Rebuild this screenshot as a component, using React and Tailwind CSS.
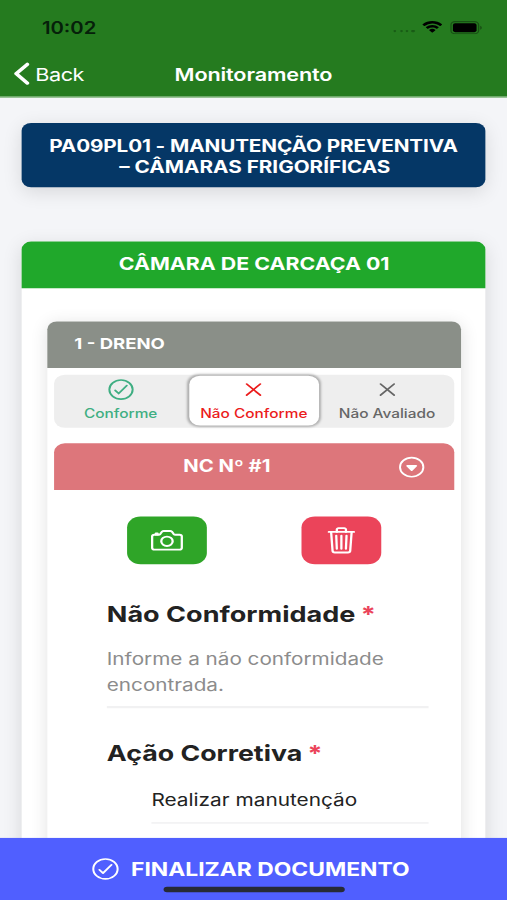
import {
  IoCameraOutline,
  IoCaretDownCircleOutline,
  IoCheckmarkCircleOutline,
  IoCloseOutline,
  IoTrashOutline,
} from 'react-icons/io5';

export default function App() {
  return (
    <div className="w-[507px] h-[900px] overflow-hidden bg-[#f4f5f8]">
      {/* 375x812 phone screen stretched to the window */}
      <div className="w-[375px] h-[812px] flex flex-col origin-top-left scale-x-[1.352] scale-y-[1.10837] bg-[#f4f5f8] font-['Inter','Liberation_Sans',sans-serif]">
        <Header />
        <main className="flex-1 min-h-0 overflow-hidden pl-4 pr-[16px] pt-[23.3px]">
          <div className="h-[58px] rounded-[7px] bg-[#053766] text-white text-center text-[15.3px] leading-[19.2px] font-bold pt-[10.5px] shadow-[0_4px_16px_rgba(0,0,0,0.12)]">
            <div className="tracking-[-0.08px]">PA09PL01 - MANUTENÇÃO PREVENTIVA</div>
            <div className="pl-[2px]">– CÂMARAS FRIGORÍFICAS</div>
          </div>
          <Chamber />
        </main>
        <Footer />
      </div>
    </div>
  );
}

const Header = () => (
  <header className="h-[88px] shrink-0 bg-[#257b1f] border-b-[0.5px] border-[#a9cfa7]">
    <div className="h-11 flex items-center justify-between pl-[31px] pr-[18px] pt-[5px] text-[#06200a]">
      <span className="text-[15px] font-semibold leading-none pt-[1px]">10:02</span>
      <div className="flex items-center">
        <div className="flex gap-[2.2px] mr-[5.5px] mt-[7px]">
          <span className="size-[2.2px] rounded-full bg-[#195c16]"></span>
          <span className="size-[2.2px] rounded-full bg-[#195c16]"></span>
          <span className="size-[2.2px] rounded-full bg-[#195c16]"></span>
          <span className="size-[2.2px] rounded-full bg-[#195c16]"></span>
        </div>
        <svg className="w-[15.5px] h-[11px] mr-[5.5px]" viewBox="0 0 16 11.5" fill="#000">
          <path d="M8 2.3c2.2 0 4.3.85 5.9 2.4.12.1.3.1.43 0l1.15-1.2a.34.34 0 0 0 0-.47 10.7 10.7 0 0 0-14.96 0 .34.34 0 0 0 0 .47l1.15 1.2c.13.1.3.1.43 0A8.5 8.5 0 0 1 8 2.3Z" />
          <path d="M8 6.1c1.2 0 2.4.45 3.3 1.25.13.12.32.12.44 0l1.15-1.2a.34.34 0 0 0 0-.48 7.1 7.1 0 0 0-9.78 0 .34.34 0 0 0 0 .48l1.15 1.2c.12.12.31.12.44 0A4.9 4.9 0 0 1 8 6.1Z" />
          <path d="M10.25 8.8a.33.33 0 0 0 0-.5 3.5 3.5 0 0 0-4.5 0 .33.33 0 0 0 0 .5l2 2.05c.14.14.36.14.5 0Z" />
        </svg>
        <svg className="w-[24px] h-[12px]" viewBox="0 0 24 12">
          <rect x="0.5" y="0.5" width="20.5" height="11" rx="3" fill="none" stroke="#000" strokeOpacity="0.35" />
          <rect x="2" y="2" width="17.5" height="8" rx="1.6" fill="#000" />
          <path d="M22.2 4.2v3.6a2 2 0 0 0 0-3.6Z" fill="#000" fillOpacity="0.4" />
        </svg>
      </div>
    </div>
    <div className="h-[43.5px] grid grid-cols-[1fr_auto_1fr] items-center px-[10px] pt-[1.5px] text-white">
      <div className="flex items-center">
        <svg className="w-[12px] h-[21px] mr-[4px]" viewBox="0 0 12 21" fill="none">
          <path d="M10.2 2 2 10.5l8.2 8.5" stroke="#fff" strokeWidth="2.9" strokeLinecap="round" strokeLinejoin="round" />
        </svg>
        <span className="text-[16px] leading-none tracking-[-0.3px]">Back</span>
      </div>
      <h1 className="text-[16px] leading-none font-semibold tracking-[-0.1px]">Monitoramento</h1>
      <span></span>
    </div>
  </header>
);

const Chamber = () => (
  <section className="mt-[48.3px] h-[640px] rounded-[7px] bg-white shadow-[0_4px_16px_rgba(0,0,0,0.12)]">
    <div className="h-[42px] rounded-t-[7px] bg-[#20a82b] text-white text-[15.8px] font-bold flex items-center justify-center pl-[1px]">
      CÂMARA DE CARCAÇA 01
    </div>

    <div className="mt-[30px] ml-[19px] mr-[18.5px] h-[600px] rounded-[7px] bg-white shadow-[0_3px_14px_rgba(0,0,0,0.12)]">
      <div className="h-[42px] rounded-t-[7px] bg-[#8a8f88] text-white text-[13.7px] font-bold flex items-center pl-[20px]">
        1 - DRENO
      </div>
      <Segment />

      {/* Non-conformity */}
      <div className="mt-[14px] mx-[5px]">
        <div className="h-[42px] rounded-t-[8px] bg-[#dd767b] text-white grid grid-cols-[1fr_auto_1fr] items-center">
          <span></span>
          <span className="text-[15px] font-bold -translate-x-[20px] pt-[2px]">NC Nº #1</span>
          <IoCaretDownCircleOutline className="justify-self-end mr-[19.5px] mt-[1px] size-[23px]" />
        </div>
        <div className="flex gap-[70px] pl-[54px] pt-[24.3px]">
          <button className="w-[59px] h-[43px] rounded-[10px] bg-[#2fa528] text-white flex items-center justify-center">
            <IoCameraOutline className="size-[27px]" />
          </button>
          <button className="w-[59px] h-[43px] rounded-[10px] bg-[#eb445a] text-white flex items-center justify-center">
            <IoTrashOutline className="size-[27px]" />
          </button>
        </div>

        <div className="pl-[39px] pr-[19px] text-[#222]">
          <h2 className="mt-[32px] text-[20px] leading-[26px] font-bold">
            Não Conformidade<span className="ml-[4px] text-[#eb445a]">*</span>
          </h2>
          <p className="mt-[17.5px] text-[15.3px] leading-[22.3px] text-[#8c8c8c]">
            Informe a não conformidade encontrada.
          </p>
          <div className="mt-[8.5px] h-[2px] bg-[#f1f1f2]"></div>

          <h2 className="mt-[27.5px] text-[19.8px] leading-[26px] font-bold">
            Ação Corretiva<span className="ml-[4px] text-[#eb445a]">*</span>
          </h2>
          <div className="ml-[33px] mt-[17.8px] pb-[9.5px] text-[15.4px] leading-[22px] border-b-[1.5px] border-[#ebebed]">
            Realizar manutenção
          </div>
        </div>
      </div>
    </div>
  </section>
);

const Segment = () => (
  <div className="mt-[6px] mx-[5px] h-[48px] rounded-[8px] bg-[#eeeeee] grid grid-cols-3 text-[11.4px] leading-[14px] font-medium">
    <div className="flex flex-col items-center pt-[2px] text-[#3fae82]">
      <IoCheckmarkCircleOutline className="size-[23px]" />
      <span className="mt-[3px]">Conforme</span>
    </div>
    <div className="my-[1.5px] mx-[1.5px] flex flex-col items-center pt-[0.5px] rounded-[8px] bg-white text-[#eb1c1c] shadow-[0_0_2px_1px_rgba(0,0,0,0.27)]">
      <IoCloseOutline className="size-[23px]" />
      <span className="mt-[3px] whitespace-nowrap">Não Conforme</span>
    </div>
    <div className="flex flex-col items-center pt-[2px] text-[#666]">
      <IoCloseOutline className="size-[23px]" />
      <span className="mt-[3px]">Não Avaliado</span>
    </div>
  </div>
);

const Footer = () => (
  <footer className="relative h-[56px] shrink-0 bg-[#505fff] text-white flex items-center justify-center pr-[6.5px]">
    <IoCheckmarkCircleOutline className="size-[24px] mr-[7.3px]" />
    <span className="text-[16.9px] font-bold leading-none">FINALIZAR DOCUMENTO</span>
    <div className="absolute left-[121px] bottom-[7.5px] w-[134px] h-[5px] rounded-full bg-[#272a35]"></div>
  </footer>
);
